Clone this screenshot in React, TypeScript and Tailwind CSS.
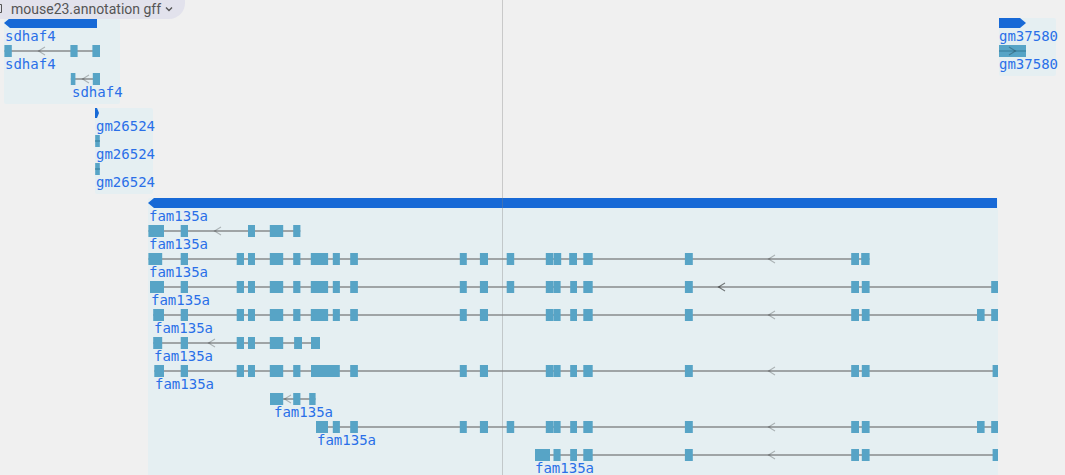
import React from "react";

type Span = [number, number];

interface Transcript {
  label: string;
  labelX: number;
  exons: Span[];
  arrow?: number;
  emphasised?: boolean;
}

interface Gene {
  id: string;
  name: string;
  x: number;
  y: number;
  width: number;
  barEnd: number;
  strand: "+" | "-";
  transcripts: Transcript[];
}

const E181: Span = [180.7, 188];
const E237: Span = [236.7, 244];
const E248: Span = [248, 255];
const E270: Span = [269.8, 283.2];
const E293: Span = [293.2, 300.4];
const E311: Span = [310.8, 328.1];
const E333: Span = [332.8, 339.9];
const E350: Span = [350.2, 357.9];
const E460: Span = [459.8, 466.8];
const E480: Span = [479.9, 488];
const E507: Span = [506.7, 514.2];
const E546: Span = [545.8, 553.4];
const E554: Span = [553.5, 560.6];
const E570: Span = [570.2, 577];
const E583: Span = [583.3, 592.7];
const E685: Span = [684.9, 692.8];
const E851: Span = [851.2, 859];
const E862: Span = [861.8, 869.6];
const E977: Span = [977, 984.6];
const E991: Span = [991.2, 998];
const E992: Span = [992.6, 998];

const genes: Gene[] = [
  {
    id: "sdhaf4", name: "sdhaf4", x: 4, y: 18, width: 116, barEnd: 97, strand: "-",
    transcripts: [
      { label: "sdhaf4", labelX: 5, arrow: 38, exons: [[4.4, 11.8], [70.4, 77.6], [92.4, 100]] },
      { label: "sdhaf4", labelX: 72, arrow: 82, exons: [[70.8, 75.4], [92.8, 100]] },
    ],
  },
  {
    id: "gm26524", name: "gm26524", x: 95, y: 108, width: 58, barEnd: 99, strand: "+",
    transcripts: [
      { label: "gm26524", labelX: 96, exons: [[95.2, 99.8]] },
      { label: "gm26524", labelX: 96, exons: [[95.2, 99.8]] },
    ],
  },
  {
    id: "fam135a", name: "fam135a", x: 148, y: 198, width: 850, barEnd: 997, strand: "-",
    transcripts: [
      { label: "fam135a", labelX: 149, arrow: 214, exons: [[148.4, 164], E181, E248, E270, E293] },
      { label: "fam135a", labelX: 149, arrow: 768, exons: [[148.4, 162.2], E181, E237, E248, E270, E293, E311, E333, E350, E460, E480, E507, E546, [553.8, 561.2], [569.2, 577], E583, E685, E851, [861.2, 869.6]] },
      { label: "fam135a", labelX: 151, arrow: 718, emphasised: true, exons: [[150, 164], E181, E237, E248, E270, E293, E311, E333, E350, E460, E480, E507, E546, E554, E570, E583, E685, E851, E862, E991] },
      { label: "fam135a", labelX: 154, arrow: 768, exons: [[153.2, 164], E181, E237, E248, E270, E293, E311, E333, E350, E460, E480, E546, E554, E570, E583, E685, E851, E862, E977, E991] },
      { label: "fam135a", labelX: 154, arrow: 208, exons: [[153.2, 162.2], E181, E237, E248, E270, [294.1, 302], [311, 320]] },
      { label: "fam135a", labelX: 155, arrow: 768, exons: [[154.3, 164], E181, E237, E248, E270, E293, [311, 339.8], E350, E460, E480, E546, E554, E570, E583, E685, E851, E862, E992] },
      { label: "fam135a", labelX: 274, arrow: 284, exons: [[270, 283.2], E293, [309.2, 315.6]] },
      { label: "fam135a", labelX: 317, arrow: 768, exons: [[316, 328], E333, E350, E460, E480, E507, E546, E554, E570, E583, E685, E851, E862, E977, E991] },
      { label: "fam135a", labelX: 535, arrow: 768, exons: [[535, 550], E554, E570, E583, E685, E851, E862, E992] },
    ],
  },
  {
    id: "gm37580", name: "gm37580", x: 999, y: 18, width: 57, barEnd: 1026, strand: "+",
    transcripts: [{ label: "gm37580", labelX: 999, arrow: 1009, exons: [[999, 1026]] }],
  },
];

function GeneBar({ gene }: { gene: Gene }) {
  const w = gene.barEnd - gene.x;
  const tip = Math.min(6, w / 2);
  const points =
    gene.strand === "-"
      ? `0,5 ${tip},0 ${w},0 ${w},10 ${tip},10`
      : `0,0 ${w - tip},0 ${w},5 ${w - tip},10 0,10`;
  return (
    <svg className="block h-2.5 shrink-0" width={gene.width} height="10" aria-hidden="true">
      <polygon points={points} fill="#1769d6" />
    </svg>
  );
}

function TranscriptGlyph({ gene, item }: { gene: Gene; item: Transcript }) {
  const start = item.exons[0][0] - gene.x;
  const end = item.exons[item.exons.length - 1][1] - gene.x;
  const single = item.exons.length === 1;
  const a = item.arrow === undefined ? null : item.arrow - gene.x;
  return (
    <svg className="block h-3 shrink-0" width={gene.width} height="12" aria-hidden="true">
      {!single && <rect x={start} y="5" width={end - start} height="2" fill="#9fa4a6" />}
      {item.exons.map(([x1, x2]) => (
        <rect key={x1} x={x1 - gene.x} y="0" width={x2 - x1} height="12" fill="#57a4c6" />
      ))}
      {single && <rect x={start} y="5" width={end - start} height="2" fill="#468faf" />}
      {a !== null && (
        <path
          d={gene.strand === "-" ? `M${a + 7} 2L${a + 0.5} 6L${a + 7} 10` : `M${a} 2L${a + 6.5} 6L${a} 10`}
          fill="none"
          stroke="#000"
          strokeOpacity={item.emphasised ? 0.5 : 0.25}
          strokeWidth="1.1"
        />
      )}
    </svg>
  );
}

function Label({ text, offset, leading }: { text: string; offset: number; leading: string }) {
  return (
    <a
      href={`#${text}`}
      className={`block whitespace-nowrap font-['DejaVu_Sans_Mono',monospace] text-sm text-[#2a6fe8] ${leading}`}
      style={{ marginLeft: offset }}
    >
      {text}
    </a>
  );
}

function GeneTrack({ gene }: { gene: Gene }) {
  return (
    <section
      aria-label={gene.name}
      className="absolute rounded-xs bg-[#e5eff2] pb-[3px]"
      style={{ left: gene.x, top: gene.y, width: gene.width }}
    >
      <div className="flex h-[27px] flex-col">
        <GeneBar gene={gene} />
        <Label text={gene.name} offset={gene.transcripts[0].labelX - gene.x} leading="leading-[17px]" />
      </div>
      {gene.transcripts.map((item, i) => (
        <div key={i} className="flex h-7 flex-col">
          <TranscriptGlyph gene={gene} item={item} />
          <Label text={item.label} offset={item.labelX - gene.x} leading="leading-[15px]" />
        </div>
      ))}
    </section>
  );
}

export default function App() {
  return (
    <main className="relative h-screen w-full overflow-hidden bg-[#f0f0f0]">
      {genes.map((gene) => (
        <GeneTrack key={gene.id} gene={gene} />
      ))}
      <div className="absolute inset-y-0 left-[502px] w-px bg-[#808080]/35" />
      <button
        type="button"
        className="relative flex h-[19px] items-center rounded-br-2xl bg-[#e2e2ec] pr-3 pb-0.5 font-['Roboto',sans-serif] text-sm text-[#555]"
      >
        <svg className="h-4 w-[11px]" viewBox="0 0 11 16" fill="none" stroke="#555" aria-hidden="true">
          <path d="M0 3.5H1.5V11.5H0" />
        </svg>
        <span className="leading-4">mouse23.annotation gff</span>
        <svg className="ml-1 h-2 w-2" viewBox="0 0 8 8" fill="none" stroke="#555" strokeWidth="1.4" aria-hidden="true">
          <path d="M1 2.5L4 5.5L7 2.5" />
        </svg>
      </button>
    </main>
  );
}
